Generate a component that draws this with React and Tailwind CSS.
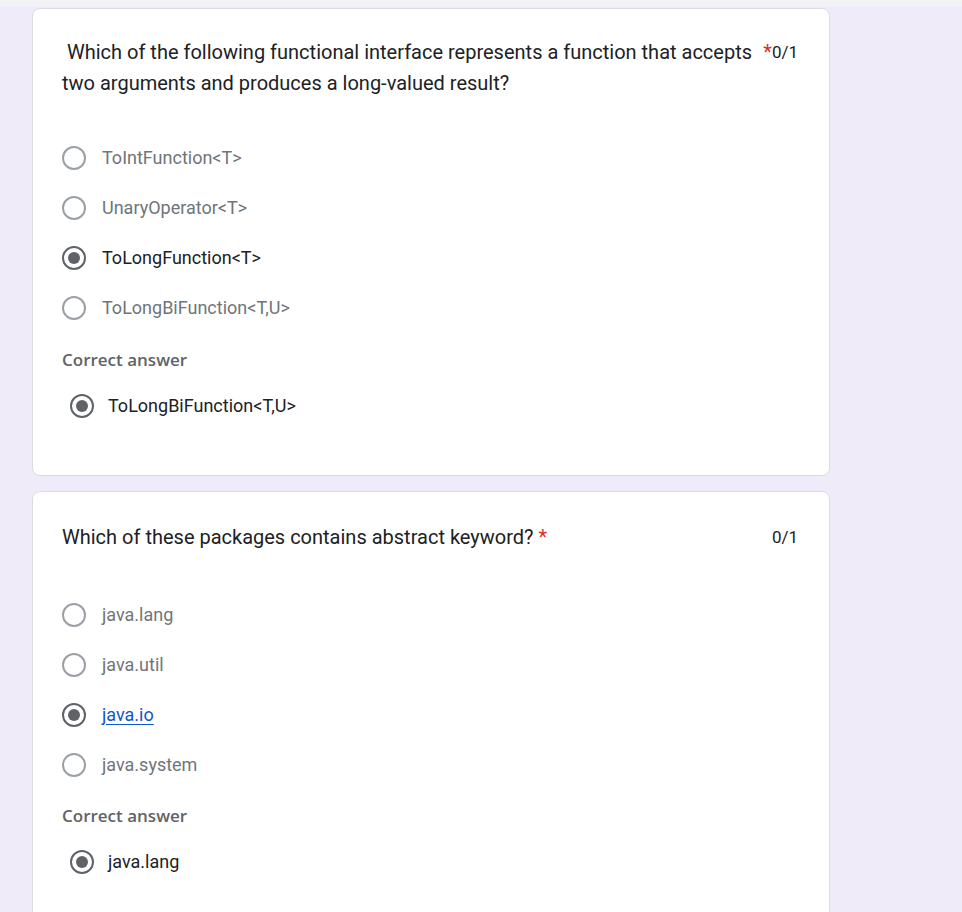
import React from 'react'

const FONT = { fontFamily: 'Roboto, "Liberation Sans", Arial, sans-serif' }
const LABEL_FONT = { fontFamily: '"Open Sans", Roboto, Arial, sans-serif' }

const QUESTIONS = [
  {
    title: ['\u00a0Which of the following functional interface represents a function that accepts', 'two arguments and produces a long-valued result?'],
    starInline: false,
    options: ['ToIntFunction<T>', 'UnaryOperator<T>', 'ToLongFunction<T>', 'ToLongBiFunction<T,U>'],
    picked: 2,
    correct: 'ToLongBiFunction<T,U>',
  },
  {
    title: ['Which of these packages contains abstract keyword?'],
    starInline: true,
    options: ['java.lang', 'java.util', 'java.io', 'java.system'],
    picked: 2,
    pickedLink: true,
    correct: 'java.lang',
  },
]

function Radio({ checked }) {
  return checked ? (
    <span className="flex h-[24px] w-[24px] shrink-0 items-center justify-center rounded-full border-2 border-[#5f6368]">
      <span className="h-[12px] w-[12px] rounded-full bg-[#5f6368]" />
    </span>
  ) : (
    <span className="h-[24px] w-[24px] shrink-0 rounded-full border-2 border-[#9aa0a6]" />
  )
}

function QuestionCard({ q, first }) {
  return (
    <div
      className={
        'w-[798px] rounded-[8px] border border-[#dadce0] bg-white pl-[29px] pr-[31px] ' +
        (first ? 'pt-[28px] pb-[44px]' : 'pt-[30px] pb-[60px]')
      }
    >
      <div className="flex items-start text-[20px] leading-[31px] text-[#202124]">
        <div className="min-w-0 flex-1 whitespace-nowrap">
          {q.title.map((line, i) => (
            <React.Fragment key={i}>
              {i > 0 && <br />}
              {line}
            </React.Fragment>
          ))}
          {q.starInline && <span className="text-[#d93025]">{'\u00a0*'}</span>}
        </div>
        {!q.starInline && <span className="ml-[10px] text-[#d93025]">*</span>}
        <span className="text-[17px]">0/1</span>
      </div>

      <div className={first ? 'mt-[34px]' : 'mt-[37px]'}>
        {q.options.map((opt, i) => {
          const on = i === q.picked
          return (
            <div key={opt} className="flex h-[50px] items-center gap-[16px]">
              <Radio checked={on} />
              <span
                className={
                  'text-[18px] leading-[24px] ' +
                  (on && q.pickedLink
                    ? 'text-[#1155cc] underline underline-offset-[3px]'
                    : on
                      ? 'text-[#202124]'
                      : 'text-[#70757a]')
                }
              >
                {opt}
              </span>
            </div>
          )
        })}
      </div>

      <div
        className={
          'text-[17px] font-semibold leading-[20px] text-[#5f6368] ' + (first ? 'mt-[17px]' : 'mt-[16px]')
        }
        style={LABEL_FONT}
      >
        Correct answer
      </div>
      <div className="mt-[11px] flex h-[50px] items-center gap-[14px] pl-[8px]">
        <Radio checked />
        <span className="text-[18px] leading-[24px] text-[#202124]">{q.correct}</span>
      </div>
    </div>
  )
}

export default function App() {
  return (
    <div className="min-h-[912px] bg-[#f0ebf8]" style={FONT}>
      <div className="h-[6px] bg-[#f1f3f4]" />
      <div className="flex flex-col gap-[15px] pl-[32px] pt-[2px]">
        {QUESTIONS.map((q, i) => (
          <QuestionCard key={i} q={q} first={i === 0} />
        ))}
      </div>
    </div>
  )
}
